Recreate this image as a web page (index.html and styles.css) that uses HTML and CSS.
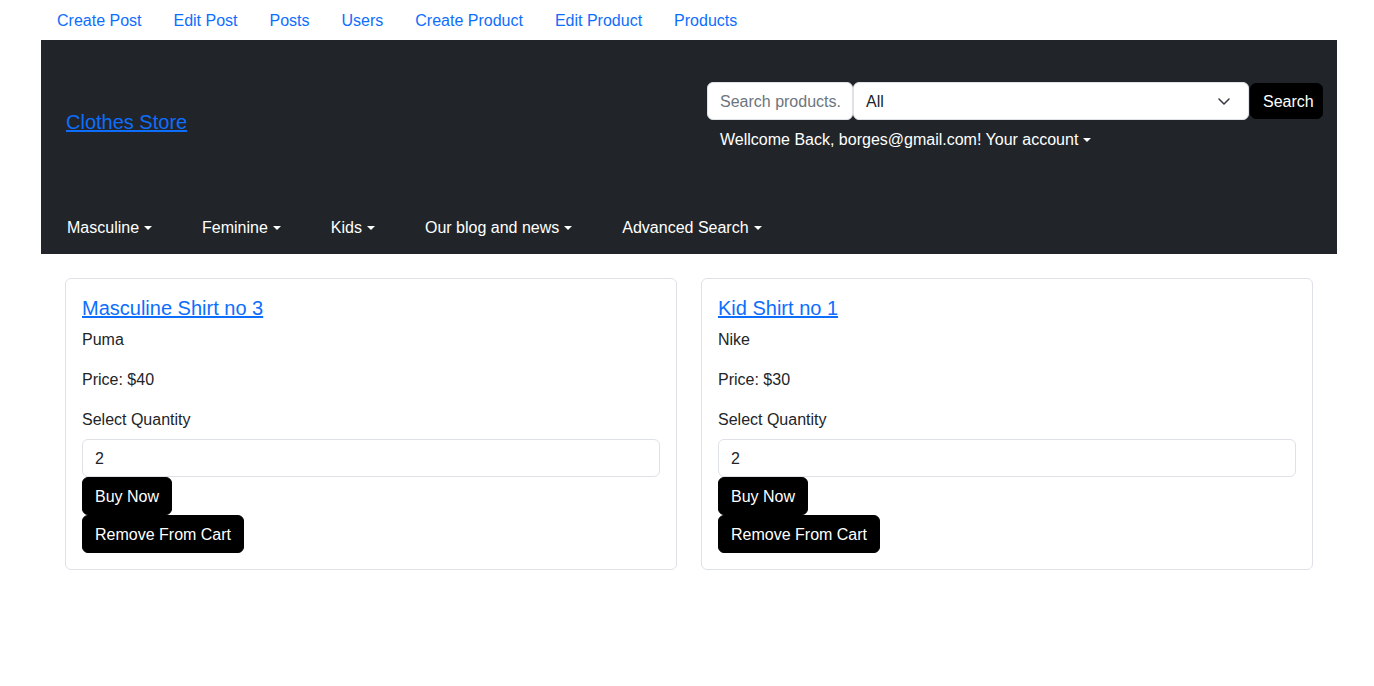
FILE: index.html
```html
<!DOCTYPE html>
<html lang="en">
<head>
<meta charset="utf-8">
<title>Clothes Store</title>
<link rel="stylesheet" href="styles.css">
</head>
<body>
<div class="page">
  <nav class="topnav">
    <a href="#">Create Post</a>
    <a href="#">Edit Post</a>
    <a href="#">Posts</a>
    <a href="#">Users</a>
    <a href="#">Create Product</a>
    <a href="#">Edit Product</a>
    <a href="#">Products</a>
  </nav>
  <header class="header">
    <div class="header-top">
      <a class="brand" href="#">Clothes Store</a>
      <div class="header-right">
        <form class="search">
          <input class="search-input" type="text" placeholder="Search products...">
          <div class="select">All
            <svg class="chev" width="16" height="16" viewBox="0 0 16 16"><path d="M3 6l5 5 5-5" fill="none" stroke="#343a40" stroke-width="1.5" stroke-linecap="round" stroke-linejoin="round"/></svg>
          </div>
          <button class="btn-black search-btn" type="button">Search</button>
        </form>
        <div class="welcome">Wellcome Back, borges@gmail.com! Your account<span class="caret"></span></div>
      </div>
    </div>
    <nav class="catnav">
      <a href="#">Masculine<span class="caret"></span></a>
      <a href="#">Feminine<span class="caret"></span></a>
      <a href="#">Kids<span class="caret"></span></a>
      <a href="#">Our blog and news<span class="caret"></span></a>
      <a href="#">Advanced Search<span class="caret"></span></a>
    </nav>
  </header>
  <main class="cards">
    <div class="card">
      <h5 class="card-title"><a href="#">Masculine Shirt no 3</a></h5>
      <p>Puma</p>
      <p>Price: $40</p>
      <label class="qty-label">Select Quantity</label>
      <div class="qty">2</div>
      <button class="btn-black" type="button">Buy Now</button>
      <button class="btn-black" type="button">Remove From Cart</button>
    </div>
    <div class="card">
      <h5 class="card-title"><a href="#">Kid Shirt no 1</a></h5>
      <p>Nike</p>
      <p>Price: $30</p>
      <label class="qty-label">Select Quantity</label>
      <div class="qty">2</div>
      <button class="btn-black" type="button">Buy Now</button>
      <button class="btn-black" type="button">Remove From Cart</button>
    </div>
  </main>
</div>
</body>
</html>
```

FILE: styles.css
```css
* { box-sizing: border-box; }
html, body { margin: 0; padding: 0; background: #fff; }
body {
  font-family: "Liberation Sans", Arial, sans-serif;
  font-size: 16px;
  line-height: 24px;
  color: #212529;
}
.page {
  width: 1296px;
  margin-left: 41px;
}
.topnav {
  display: flex;
  height: 40px;
}
.topnav a {
  color: #0d6efd;
  text-decoration: none;
  padding: 9px 16px 7px;
}
.header {
  background: #212529;
  height: 214px;
  display: flex;
  flex-direction: column;
}
.header-top {
  display: flex;
  height: 160px;
  padding-left: 25px;
}
.brand {
  align-self: center;
  color: #0d6efd;
  font-size: 20px;
  line-height: 30px;
  margin-top: 3px;
  text-decoration: underline;
}
.header-right {
  margin-left: auto;
  margin-right: 14px;
  padding-top: 42px;
  width: 616px;
}
.search {
  display: flex;
  margin: 0;
  align-items: center;
}
.search-input {
  width: 146px;
  height: 38px;
  border: 1px solid #dee2e6;
  border-radius: 6px;
  background: #fff;
  padding: 7px 12px 5px;
  font: inherit;
  color: #212529;
  outline: none;
}
.search-input::placeholder { color: #6c757d; }
.select {
  width: 396px;
  height: 38px;
  border: 1px solid #dee2e6;
  border-radius: 6px;
  background: #fff;
  padding: 7px 12px 5px;
  color: #212529;
  display: flex;
  align-items: center;
  justify-content: space-between;
}
.chev { width: 16px; height: 16px; margin-right: 4px; margin-top: -2px; }
.btn-black {
  display: block;
  background: #000;
  color: #fff;
  border: 1px solid #000;
  border-radius: 6px;
  font: inherit;
  line-height: 24px;
  padding: 7px 12px 5px;
  cursor: pointer;
}
.search-btn {
  margin-left: 1px;
  height: 36px;
  padding: 6px 12px 4px;
  width: 73px;
}
.welcome {
  color: #fff;
  padding: 8px 13px 0;
  line-height: 24px;
}
.caret {
  display: inline-block;
  margin-left: 5px;
  vertical-align: 3px;
  border-top: 4px solid currentColor;
  border-left: 4px solid transparent;
  border-right: 4px solid transparent;
}
.catnav {
  display: flex;
  padding-left: 26px;
  padding-top: 16px;
}
.catnav a {
  color: #fff;
  text-decoration: none;
  line-height: 24px;
  margin-right: 50px;
}
.cards {
  display: grid;
  grid-template-columns: 1fr 1fr;
  gap: 24px;
  padding: 24px 24px 0;
}
.card {
  border: 1px solid #dee2e6;
  border-radius: 6px;
  padding: 16px;
  display: flex;
  flex-direction: column;
  align-items: flex-start;
}
.card-title {
  margin: 0 0 8px;
  font-size: 20px;
  line-height: 24px;
  font-weight: 500;
  padding-top: 1px;
  height: 24px;
}
.card-title a { color: #0d6efd; text-decoration: underline; }
.card p { margin: 0 0 16px; padding-top: 1px; height: 24px; }
.qty-label { display: block; margin-bottom: 8px; padding-top: 1px; height: 24px; }
.qty {
  width: 100%;
  height: 38px;
  border: 1px solid #dee2e6;
  border-radius: 6px;
  padding: 7px 12px 5px;
}
```
